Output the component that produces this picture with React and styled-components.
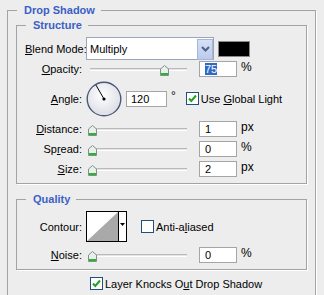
import React from "react";
import styled, { createGlobalStyle } from "styled-components";

const Global = createGlobalStyle`
    html, body {
        margin: 0;
        padding: 0;
        background: #ededed;
        overflow: hidden;
    }
    body {
        width: 324px;
        height: 295px;
        font-family: "Liberation Sans", Arial, sans-serif;
        font-size: 11px;
        color: #000;
    }
`;

const Page = styled.div`
    width: 324px;
    height: 295px;
    padding: 3px 0 0 7px;
    box-sizing: border-box;
    background: #ededed;
`;

const Group = styled.fieldset`
    margin: ${(p) => p.$margin || "0"};
    padding: ${(p) => p.$padding || "0 8px"};
    width: ${(p) => p.$width}px;
    min-height: ${(p) => p.$minHeight || 0}px;
    box-sizing: border-box;
    border: 1px solid #a3a3a3;
    box-shadow: 1px 1px 0 #fff;
    min-width: 0;
`;

const Legend = styled.legend`
    margin-left: 1px;
    padding: 0 6px 0 7px;
    font-weight: bold;
    font-size: 11px;
    line-height: 14px;
    color: #3b5fc6;
`;

const Rows = styled.div`
    display: flex;
    flex-direction: column;
`;

const Row = styled.div`
    display: flex;
    align-items: center;
    height: ${(p) => p.$height || 16}px;
    margin-top: ${(p) => p.$top || 0}px;
`;

const Label = styled.div`
    width: 57px;
    margin-right: 4px;
    text-align: right;
    white-space: nowrap;
`;

const SelectBox = styled.div`
    width: 128px;
    height: 23px;
    box-sizing: border-box;
    border: 1px solid #9aa6ba;
    background: #fff;
    display: flex;
    align-items: center;
    padding-left: 3px;
`;

const SelectButton = styled.div`
    margin: 1px 0 0 auto;
    width: 16px;
    height: 21px;
    box-sizing: border-box;
    border: 1px solid #a6b6d6;
    background: linear-gradient(#d6e0f6, #bccbec);
    display: flex;
    align-items: center;
    justify-content: center;
`;

const Swatch = styled.div`
    margin-left: 4px;
    width: 32px;
    height: 16px;
    box-sizing: border-box;
    border: 1px solid #8a8a8a;
    background: #000;
`;

const SliderWrap = styled.div`
    position: relative;
    width: 107px;
    height: 16px;
    margin-left: 2px;
    flex: none;
`;

const Track = styled.div`
    position: absolute;
    left: 2px;
    width: 97px;
    top: 7px;
    height: 3px;
    box-sizing: border-box;
    border-top: 1px solid #b9b9b9;
    border-bottom: 1px solid #fff;
    background: #e4e4e4;
`;

const Thumb = styled.svg`
    position: absolute;
    top: 4px;
`;

const Field = styled.div`
    width: ${(p) => p.$width || 38}px;
    height: 16px;
    box-sizing: border-box;
    border: 1px solid #a5a5a5;
    background: #fff;
    padding-left: ${(p) => p.$pad || 5}px;
    margin-left: ${(p) => p.$left || 4}px;
    display: flex;
    align-items: center;
    flex: none;
`;

const Selected = styled.span`
    background: #3169c6;
    color: #fff;
    line-height: 12px;
`;

const Unit = styled.span`
    margin-left: 4px;
    align-self: ${(p) => (p.$mid ? "center" : "flex-start")};
    margin-top: ${(p) => (p.$mid ? -5 : 0)}px;
    line-height: 12px;
    font-size: 12px;
`;

const Check = styled.label`
    display: flex;
    align-items: center;
    gap: 2px;
    margin-left: ${(p) => p.$left || 0}px;
    white-space: nowrap;
`;

const Box = styled.span`
    width: 13px;
    height: 13px;
    box-sizing: border-box;
    border: 1px solid #1f4f7f;
    background: #fff;
    display: flex;
    align-items: center;
    justify-content: center;
`;

const Bottom = styled.div`
    margin-top: 7px;
    padding-left: 74px;
    display: flex;
`;

function Slider({ value }) {
    return (
        <SliderWrap>
            <Track />
            <Thumb width="9" height="11" viewBox="0 0 9 11" style={{ left: Math.round(value * 0.96) }}>
                <path d="M0.5 10.5V4L4.5 0.5L8.5 4V10.5Z" fill="#e9efec" stroke="#7d918c" />
                <rect x="1" y="8" width="7" height="2" fill="#2fb32f" />
            </Thumb>
        </SliderWrap>
    );
}

function CheckBox({ children, left, checked = true }) {
    return (
        <Check $left={left}>
            <Box>
                {checked && (
                    <svg width="9" height="9" viewBox="0 0 9 9">
                        <path d="M1 4.5L3.3 7L8 1.5" fill="none" stroke="#21a121" strokeWidth="2" />
                    </svg>
                )}
            </Box>
            <span>{children}</span>
        </Check>
    );
}

function Dial({ angle }) {
    const r = (angle * Math.PI) / 180;
    const x = 18 + Math.cos(r) * 16;
    const y = 18 - Math.sin(r) * 16;
    return (
        <svg width="36" height="36" viewBox="0 0 36 36">
            <defs>
                <radialGradient id="dialFill" cx="45%" cy="40%" r="60%">
                    <stop offset="0" stopColor="#ffffff" />
                    <stop offset="1" stopColor="#dcdde6" />
                </radialGradient>
            </defs>
            <circle cx="18" cy="18" r="16.8" fill="url(#dialFill)" stroke="#4b5878" strokeWidth="1.4" />
            <line x1="18" y1="18" x2={x} y2={y} stroke="#000" strokeWidth="1" />
            <circle cx="18" cy="18" r="1.6" fill="#000" />
        </svg>
    );
}

function Contour() {
    return (
        <svg width="41" height="31" viewBox="0 0 41 31">
            <rect x="0.5" y="0.5" width="40" height="30" fill="#fff" stroke="#000" />
            <path d="M1 30L32 1V30Z" fill="#a9a9a9" />
            <line x1="32.5" y1="1" x2="32.5" y2="30" stroke="#000" />
            <path d="M34 12H39L36.5 15Z" fill="#000" />
        </svg>
    );
}

export default function App() {
    return (
        <Page>
            <Global />
            <Group $width={309} $minHeight={300} $padding="1px 8px 0">
                <Legend>Drop Shadow</Legend>
                <Group $width={291} $padding="5px 8px 6px">
                    <Legend>Structure</Legend>
                    <Rows>
                        <Row $height={23}>
                            <Label><u>B</u>lend Mode:</Label>
                            <SelectBox>
                                Multiply
                                <SelectButton>
                                    <svg width="9" height="6" viewBox="0 0 9 6">
                                        <path d="M1 1L4.5 4.5L8 1" fill="none" stroke="#4d6185" strokeWidth="2" />
                                    </svg>
                                </SelectButton>
                            </SelectBox>
                            <Swatch />
                        </Row>
                        <Row $top={1}>
                            <Label><u>O</u>pacity:</Label>
                            <Slider value={75} />
                            <Field><Selected>75</Selected></Field>
                            <Unit>%</Unit>
                        </Row>
                        <Row $height={35} $top={4}>
                            <Label><u>A</u>ngle:</Label>
                            <Dial angle={120} />
                            <Field $width={41} $pad={4} $left={4}>120</Field>
                            <Unit $mid>°</Unit>
                            <CheckBox left={10}>Use <u>G</u>lobal Light</CheckBox>
                        </Row>
                        <Row $top={5}>
                            <Label><u>D</u>istance:</Label>
                            <Slider value={0} />
                            <Field>1</Field>
                            <Unit>px</Unit>
                        </Row>
                        <Row $top={4}>
                            <Label>Sp<u>r</u>ead:</Label>
                            <Slider value={0} />
                            <Field>0</Field>
                            <Unit>%</Unit>
                        </Row>
                        <Row $top={4}>
                            <Label><u>S</u>ize:</Label>
                            <Slider value={0} />
                            <Field>2</Field>
                            <Unit>px</Unit>
                        </Row>
                    </Rows>
                </Group>
                <Group $width={291} $margin="8px 0 0" $padding="5px 8px 6px">
                    <Legend>Quality</Legend>
                    <Rows>
                        <Row $height={31}>
                            <Label>Contour:</Label>
                            <Contour />
                            <CheckBox left={14} checked={false}>Anti-a<u>l</u>iased</CheckBox>
                        </Row>
                        <Row $top={5}>
                            <Label><u>N</u>oise:</Label>
                            <Slider value={0} />
                            <Field>0</Field>
                            <Unit>%</Unit>
                        </Row>
                    </Rows>
                </Group>
                <Bottom>
                    <CheckBox>Layer Knocks O<u>u</u>t Drop Shadow</CheckBox>
                </Bottom>
            </Group>
        </Page>
    );
}
